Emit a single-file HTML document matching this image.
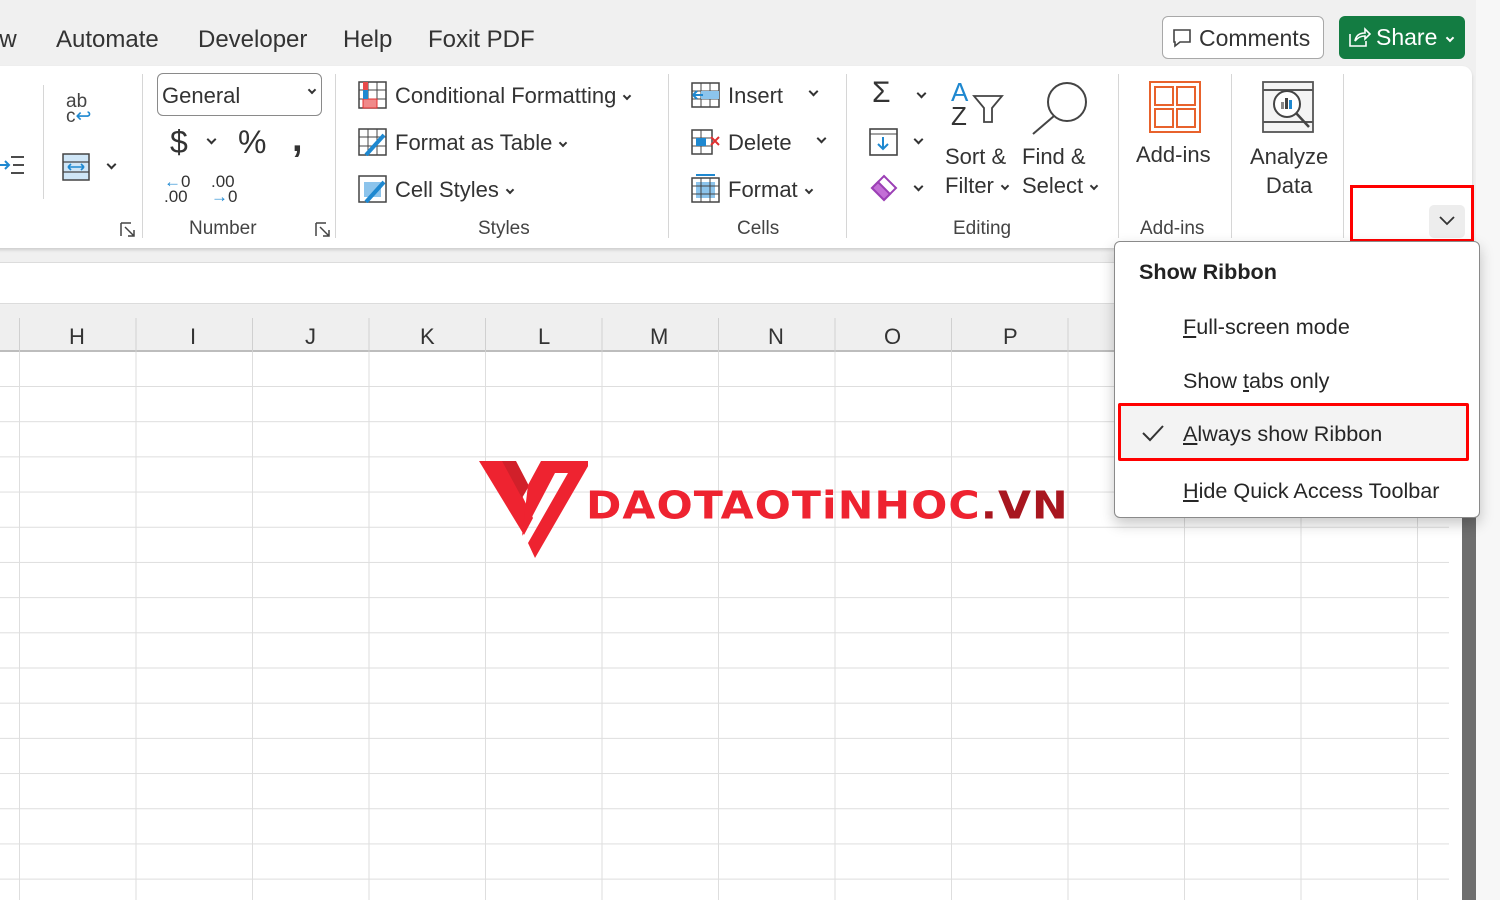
<!DOCTYPE html>
<html><head><meta charset="utf-8"><style>
*{margin:0;padding:0;box-sizing:border-box}
body{width:1500px;height:900px;overflow:hidden;background:#f0f0f0;font-family:"Liberation Sans",sans-serif;color:#262626;position:relative}
.a{position:absolute;white-space:nowrap}
.t{font-size:24px;color:#333;top:26px}
.r{font-size:22px;color:#333}
.l{font-size:19px;color:#444;top:218px}
.sep{position:absolute;width:1px;background:#d6d6d6;top:74px;height:164px}
.chev{display:inline-block;width:7px;height:7px;border-right:2px solid #333;border-bottom:2px solid #333;transform:rotate(45deg);margin-left:8px;vertical-align:4px}
.mi{font-size:21.6px;color:#262626;position:absolute;left:68px}
</style></head><body>
<!-- tabs -->
<div class="a t" style="left:-14px">ew</div>
<div class="a t" style="left:56px">Automate</div>
<div class="a t" style="left:198px">Developer</div>
<div class="a t" style="left:343px">Help</div>
<div class="a t" style="left:428px">Foxit PDF</div>
<div class="a" style="left:1162px;top:16px;width:162px;height:43px;border:1px solid #a8a8a8;border-radius:6px;background:#fff;font-size:23px;color:#333;padding:8px 0 0 36px">Comments
<svg class="a" style="left:9px;top:11px" width="20" height="20"><path d="M2 2h16v12H8l-5 4v-4H2z" fill="none" stroke="#444" stroke-width="1.6"/></svg></div>
<div class="a" style="left:1339px;top:16px;width:126px;height:43px;border-radius:6px;background:#137c42;color:#fff;font-size:23px;padding:8px 0 0 37px">Share<span class="chev" style="border-color:#fff;width:6px;height:6px;margin-left:10px"></span>
<svg class="a" style="left:8px;top:10px" width="24" height="22"><path d="M3 8v12h16v-5M8 15c1-6 5-8 10-8V3l5 5-5 5V10c-4 0-7 1-10 5z" fill="none" stroke="#fff" stroke-width="1.6"/></svg></div>
<!-- ribbon -->
<div class="a" style="left:-10px;top:66px;width:1482px;height:182px;background:#fff;border-radius:10px;box-shadow:0 2px 3px rgba(0,0,0,.15)"></div>
<div class="sep" style="left:43px;top:85px;height:114px"></div>
<div class="sep" style="left:142px"></div>
<div class="sep" style="left:335px"></div>
<div class="sep" style="left:668px"></div>
<div class="sep" style="left:846px"></div>
<div class="sep" style="left:1118px"></div>
<div class="sep" style="left:1231px"></div>
<div class="sep" style="left:1343px"></div>
<svg class="a" style="left:0;top:153px" width="26" height="26"><path d="M11 4h13M13 12h11M11 20h13" stroke="#333" stroke-width="1.8" fill="none"/><path d="M0 12h8M5 8l4 4-4 4" stroke="#1e88d0" stroke-width="2" fill="none"/></svg>
<div class="a" style="left:66px;top:94px;font-size:19px;line-height:15px;color:#444">ab<br>c<span style="color:#1e88d0">↩</span></div>
<svg class="a" style="left:62px;top:153px" width="30" height="30"><rect x="1" y="1" width="26" height="26" fill="#cfe6f7" stroke="#444" stroke-width="1.5"/><path d="M1 9h26M1 19h26" stroke="#444" stroke-width="1.2"/><path d="M6 14h16M6 14l3-3M6 14l3 3M22 14l-3-3M22 14l-3 3" stroke="#1e88d0" stroke-width="1.6" fill="none"/></svg>
<span class="a chev" style="left:100px;top:161px"></span>
<svg class="a" style="left:120px;top:222px" width="16" height="16"><path d="M1 1h10M1 1v13M5 5l9 9M14 8v6H8" stroke="#444" stroke-width="1.5" fill="none"/></svg>
<!-- number -->
<div class="a" style="left:157px;top:73px;width:165px;height:43px;border:1px solid #8a8a8a;border-radius:6px;font-size:22px;padding:9px 0 0 4px;color:#333">General<span class="chev" style="position:absolute;right:6px;top:13px;width:6px;height:6px"></span></div>
<div class="a" style="left:170px;top:124px;font-size:32px;color:#333">$</div>
<span class="a chev" style="left:200px;top:136px"></span>
<div class="a" style="left:238px;top:124px;font-size:32px;color:#333">%</div>
<div class="a" style="left:292px;top:118px;font-size:38px;font-weight:bold;color:#333">,</div>
<div class="a" style="left:164px;top:174px;font-size:17px;line-height:15px;color:#333"><span style="color:#1e88d0">←</span>0<br>.00</div>
<div class="a" style="left:211px;top:174px;font-size:17px;line-height:15px;color:#333">.00<br><span style="color:#1e88d0">→</span>0</div>
<div class="a l" style="left:189px">Number</div>
<svg class="a" style="left:315px;top:222px" width="16" height="16"><path d="M1 1h10M1 1v13M5 5l9 9M14 8v6H8" stroke="#444" stroke-width="1.5" fill="none"/></svg>
<!-- styles -->
<svg class="a" style="left:358px;top:81px" width="30" height="28"><rect x="1" y="1" width="27" height="26" fill="#fff" stroke="#444" stroke-width="1.5"/><path d="M1 9h27M1 18h27M10 1v26M19 1v26" stroke="#444" stroke-width="1"/><rect x="5" y="1" width="5" height="8" fill="#e84b4b"/><rect x="5" y="18" width="14" height="9" fill="#f08a8a" stroke="#e03030"/><rect x="5" y="9" width="5" height="9" fill="#1e88d0"/></svg>
<div class="a r" style="left:395px;top:83px">Conditional Formatting<span class="chev" style="width:6px;height:6px"></span></div>
<svg class="a" style="left:358px;top:128px" width="30" height="28"><rect x="1" y="1" width="27" height="26" fill="#fff" stroke="#444" stroke-width="1.5"/><path d="M1 9h27M1 18h27M10 1v26M19 1v26" stroke="#444" stroke-width="1"/><path d="M8 27l18-20" stroke="#1e88d0" stroke-width="4"/></svg>
<div class="a r" style="left:395px;top:130px">Format as Table<span class="chev" style="width:6px;height:6px"></span></div>
<svg class="a" style="left:358px;top:175px" width="30" height="28"><rect x="1" y="1" width="27" height="26" fill="#fff" stroke="#444" stroke-width="1.5"/><rect x="6" y="7" width="17" height="15" fill="#8cc4ec"/><path d="M8 27l18-20" stroke="#1e88d0" stroke-width="4"/></svg>
<div class="a r" style="left:395px;top:177px">Cell Styles<span class="chev" style="width:6px;height:6px"></span></div>
<div class="a l" style="left:478px">Styles</div>
<!-- cells -->
<svg class="a" style="left:690px;top:81px" width="32" height="28"><rect x="2" y="2" width="27" height="24" fill="#fff" stroke="#444" stroke-width="1.5"/><path d="M2 10h27M2 18h27M11 2v24M20 2v24" stroke="#444"/><rect x="11" y="10" width="18" height="8" fill="#8cc4ec"/><path d="M3 14h10M3 14l4-4M3 14l4 4" stroke="#1e88d0" stroke-width="2" fill="none"/></svg>
<div class="a r" style="left:728px;top:83px">Insert</div><span class="a chev" style="left:802px;top:88px"></span>
<svg class="a" style="left:690px;top:128px" width="32" height="28"><rect x="2" y="2" width="20" height="24" fill="#fff" stroke="#444" stroke-width="1.5"/><path d="M2 10h20M2 18h20M11 2v24" stroke="#444"/><rect x="6" y="10" width="10" height="8" fill="#1e88d0"/><path d="M21 9l8 8M29 9l-8 8" stroke="#e03030" stroke-width="2"/></svg>
<div class="a r" style="left:728px;top:130px">Delete</div><span class="a chev" style="left:810px;top:135px"></span>
<svg class="a" style="left:690px;top:174px" width="32" height="30"><rect x="2" y="4" width="27" height="24" fill="#fff" stroke="#444" stroke-width="1.5"/><rect x="6" y="8" width="19" height="16" fill="#8cc4ec"/><path d="M2 12h27M2 20h27M11 4v24M20 4v24" stroke="#444"/><path d="M6 1h19" stroke="#1e88d0" stroke-width="2"/></svg>
<div class="a r" style="left:728px;top:177px">Format<span class="chev" style="width:6px;height:6px"></span></div>
<div class="a l" style="left:737px">Cells</div>
<!-- editing -->
<div class="a" style="left:872px;top:76px;font-size:30px;color:#333">Σ</div><span class="a chev" style="left:910px;top:90px"></span>
<svg class="a" style="left:869px;top:128px" width="30" height="28"><rect x="1" y="1" width="27" height="26" fill="#fff" stroke="#444" stroke-width="1.6"/><path d="M1 6h27" stroke="#444"/><path d="M14 9v12M9 16l5 5 5-5" stroke="#1e88d0" stroke-width="2" fill="none"/></svg><span class="a chev" style="left:907px;top:136px"></span>
<svg class="a" style="left:869px;top:174px" width="30" height="30"><path d="M15 2l12 12-12 12L3 14z" fill="#fff" stroke="#9b3fb5" stroke-width="2"/><path d="M9 8l12 12-6 6L3 14z" fill="#c36fd6" stroke="#9b3fb5" stroke-width="2"/></svg><span class="a chev" style="left:907px;top:183px"></span>
<div class="a" style="left:951px;top:80px;font-size:26px;line-height:24px;color:#333"><span style="color:#1e88d0">A</span><br>Z</div>
<svg class="a" style="left:972px;top:94px" width="32" height="30"><path d="M2 2h28L20 14v14h-8V14z" fill="#fff" stroke="#444" stroke-width="1.8"/></svg>
<svg class="a" style="left:1030px;top:80px" width="60" height="56"><circle cx="37" cy="22" r="19" fill="#fff" stroke="#444" stroke-width="2"/><path d="M24 36L3 54" stroke="#444" stroke-width="2"/></svg>
<div class="a r" style="left:945px;top:142px;line-height:29px">Sort &amp;<br>Filter<span class="chev" style="width:6px;height:6px"></span></div>
<div class="a r" style="left:1022px;top:142px;line-height:29px">Find &amp;<br>Select<span class="chev" style="width:6px;height:6px"></span></div>
<div class="a l" style="left:953px">Editing</div>
<!-- add-ins -->
<svg class="a" style="left:1148px;top:80px" width="54" height="54"><rect x="2" y="2" width="50" height="50" fill="#fff" stroke="#e8622c" stroke-width="2"/><rect x="7" y="7" width="18" height="18" fill="none" stroke="#e8622c" stroke-width="2"/><rect x="29" y="7" width="18" height="18" fill="none" stroke="#e8622c" stroke-width="2"/><rect x="7" y="29" width="18" height="18" fill="none" stroke="#e8622c" stroke-width="2"/><rect x="29" y="29" width="18" height="18" fill="none" stroke="#e8622c" stroke-width="2"/></svg>
<div class="a r" style="left:1136px;top:142px">Add-ins</div>
<div class="a l" style="left:1140px">Add-ins</div>
<svg class="a" style="left:1261px;top:80px" width="54" height="54"><rect x="2" y="2" width="50" height="50" fill="#f4f4f4" stroke="#555" stroke-width="1.8"/><path d="M2 10h50M2 42h50" stroke="#555" stroke-width="2"/><circle cx="26" cy="24" r="13" fill="#fff" stroke="#444" stroke-width="2"/><rect x="20" y="22" width="3" height="7" fill="#888"/><rect x="24" y="18" width="3" height="11" fill="#444"/><rect x="28" y="20" width="3" height="9" fill="#1e88d0"/><path d="M35 33l13 14" stroke="#444" stroke-width="2.5"/></svg>
<div class="a r" style="left:1250px;top:142px;line-height:29px;text-align:center">Analyze<br>Data</div>
<div class="a" style="left:1429px;top:205px;width:36px;height:33px;background:#ededed;border-radius:5px"></div>
<svg class="a" style="left:1438px;top:215px" width="18" height="12"><path d="M2 2l7 7 7-7" stroke="#333" stroke-width="1.8" fill="none"/></svg>
<div class="a" style="left:1350px;top:185px;width:124px;height:57px;border:3px solid #f00"></div>
<!-- formula bar -->
<div class="a" style="left:0;top:262px;width:1462px;height:42px;background:#fff;border-top:1px solid #dcdcdc;border-bottom:1px solid #dcdcdc"></div>
<div class="a" style="left:0;top:305px;width:1462px;height:47px;background:#efefef;border-bottom:2px solid #bdbdbd"></div>
<!-- grid -->
<div class="a" style="left:0;top:352px;width:1449px;height:548px;background-color:#fff;background-image:linear-gradient(to right,#dedede 1px,transparent 1px),linear-gradient(to bottom,#dedede 1px,transparent 1px);background-size:116.5px 35.2px;background-position:19px 0,0 34px"></div>
<div class="a" style="left:1449px;top:352px;width:13px;height:548px;background:#fff"></div>
<div class="a" style="left:1462px;top:480px;width:14px;height:420px;background:#6e6e6e"></div>
<div class="a" style="left:1476px;top:0;width:24px;height:900px;background:#f7f7f7"></div>
<div style="position:absolute;left:0;top:318px;width:1462px;height:34px;background-image:linear-gradient(to right,#d0d0d0 1px,transparent 1px);background-size:116.5px 34px;background-position:19px 0"></div>
<div class="a" style="left:69px;top:324px;font-size:22px;color:#333">H</div>
<div class="a" style="left:190px;top:324px;font-size:22px;color:#333">I</div>
<div class="a" style="left:305px;top:324px;font-size:22px;color:#333">J</div>
<div class="a" style="left:420px;top:324px;font-size:22px;color:#333">K</div>
<div class="a" style="left:538px;top:324px;font-size:22px;color:#333">L</div>
<div class="a" style="left:650px;top:324px;font-size:22px;color:#333">M</div>
<div class="a" style="left:768px;top:324px;font-size:22px;color:#333">N</div>
<div class="a" style="left:884px;top:324px;font-size:22px;color:#333">O</div>
<div class="a" style="left:1003px;top:324px;font-size:22px;color:#333">P</div>
<!-- logo -->
<svg class="a" style="left:478px;top:458px" width="110" height="100"><path d="M1 3h26l28 57-9 17z" fill="#ee2330"/><path d="M24 3h14l13 25-7 12z" fill="#d1202a"/><path d="M50 27l13-24h50L57 100l-7-15L90 15h-13L44 78z" fill="#ee2330"/></svg>
<div class="a" style="left:586px;top:483px;font-size:41px;font-weight:bold;color:#ee2330;letter-spacing:1px;transform:scaleX(1.04) scaleY(.93);transform-origin:left top;font-family:'DejaVu Sans',sans-serif">DAOTAOTiNHOC<span style="color:#a8161f">.VN</span></div>
<!-- menu -->
<div class="a" style="left:1114px;top:241px;width:366px;height:277px;background:#fff;border:1px solid #8a8a8a;border-radius:6px;box-shadow:0 6px 14px rgba(0,0,0,.22)">
<div class="a" style="left:24px;top:17px;font-size:21.6px;font-weight:bold;color:#222">Show Ribbon</div>
<div class="mi" style="top:72px"><u>F</u>ull-screen mode</div>
<div class="mi" style="top:126px">Show <u>t</u>abs only</div>
<div class="a" style="left:4px;top:163px;width:350px;height:53px;background:#f3f3f3"></div>
<svg class="a" style="left:26px;top:182px" width="24" height="18"><path d="M2 9l7 7L22 2" stroke="#333" stroke-width="2" fill="none"/></svg>
<div class="mi" style="top:179px"><u>A</u>lways show Ribbon</div>
<div class="mi" style="top:236px"><u>H</u>ide Quick Access Toolbar</div>
</div>
<div class="a" style="left:1118px;top:403px;width:351px;height:58px;border:3px solid #f00;border-radius:2px"></div>
</body></html>
